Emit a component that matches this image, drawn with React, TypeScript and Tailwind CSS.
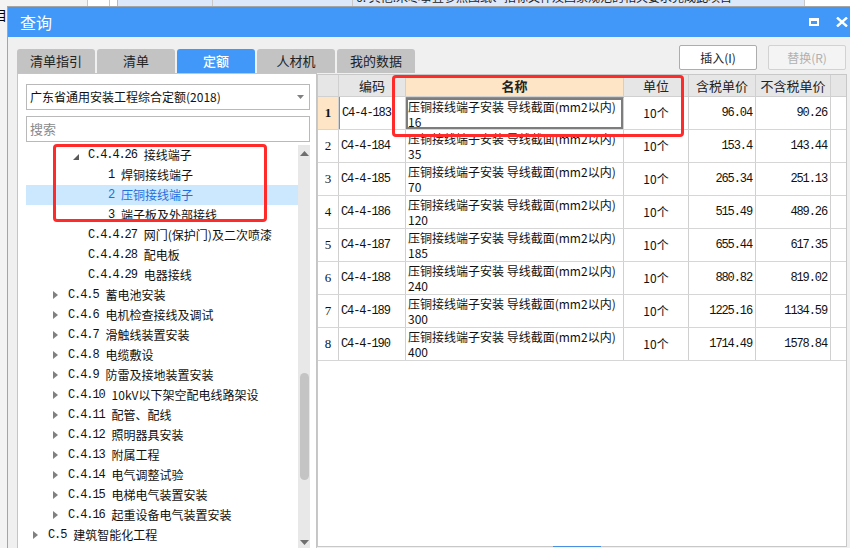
import React from "react";

const mono = "font-['Liberation_Mono',monospace] text-[12px] tracking-[-1.1px]";

type Node = {
  level: number;
  code: string;
  text: string;
  kind: "open" | "closed" | "leaf";
  selected?: boolean;
};

const tree: Node[] = [
  { level: 2, code: "C.4.4.26", text: "接线端子", kind: "open" },
  { level: 3, code: "1", text: "焊铜接线端子", kind: "leaf" },
  { level: 3, code: "2", text: "压铜接线端子", kind: "leaf", selected: true },
  { level: 3, code: "3", text: "端子板及外部接线", kind: "leaf" },
  { level: 2, code: "C.4.4.27", text: "网门(保护门)及二次喷漆", kind: "leaf" },
  { level: 2, code: "C.4.4.28", text: "配电板", kind: "leaf" },
  { level: 2, code: "C.4.4.29", text: "电器接线", kind: "leaf" },
  { level: 1, code: "C.4.5", text: "蓄电池安装", kind: "closed" },
  { level: 1, code: "C.4.6", text: "电机检查接线及调试", kind: "closed" },
  { level: 1, code: "C.4.7", text: "滑触线装置安装", kind: "closed" },
  { level: 1, code: "C.4.8", text: "电缆敷设", kind: "closed" },
  { level: 1, code: "C.4.9", text: "防雷及接地装置安装", kind: "closed" },
  { level: 1, code: "C.4.10", text: "10kV以下架空配电线路架设", kind: "closed" },
  { level: 1, code: "C.4.11", text: "配管、配线", kind: "closed" },
  { level: 1, code: "C.4.12", text: "照明器具安装", kind: "closed" },
  { level: 1, code: "C.4.13", text: "附属工程", kind: "closed" },
  { level: 1, code: "C.4.14", text: "电气调整试验", kind: "closed" },
  { level: 1, code: "C.4.15", text: "电梯电气装置安装", kind: "closed" },
  { level: 1, code: "C.4.16", text: "起重设备电气装置安装", kind: "closed" },
  { level: 0, code: "C.5", text: "建筑智能化工程", kind: "closed" },
];

const indent = ["pl-[7px]", "pl-[27px]", "pl-[47px]", "pl-[67px]"];

const rows = [
  ["C4-4-183", "16", "96.04", "90.26"],
  ["C4-4-184", "35", "153.4", "143.44"],
  ["C4-4-185", "70", "265.34", "251.13"],
  ["C4-4-186", "120", "515.49", "489.26"],
  ["C4-4-187", "185", "655.44", "617.35"],
  ["C4-4-188", "240", "880.82", "819.02"],
  ["C4-4-189", "300", "1225.16", "1134.59"],
  ["C4-4-190", "400", "1714.49", "1578.84"],
];

const cols = "grid grid-cols-[21px_67px_218px_65px_67px_75px]";

function TreeRow({ node }: { node: Node }) {
  return (
    <div
      className={`h-[20px] flex items-center whitespace-nowrap ${indent[node.level]} ${
        node.selected ? "bg-[#cce8ff] text-[#1f6fdc]" : "text-[#111]"
      }`}
    >
      <span className="w-[15px] flex items-center shrink-0">
        {node.kind === "closed" && (
          <svg width="5" height="8" viewBox="0 0 5 8">
            <path d="M0 0 L5 4 L0 8 Z" fill="#808080" />
          </svg>
        )}
        {node.kind === "open" && (
          <svg width="6" height="6" viewBox="0 0 6 6" className="mt-[3px]">
            <path d="M6 0 L6 6 L0 6 Z" fill="#5a5a5a" />
          </svg>
        )}
      </span>
      <span className={mono}>{node.code}</span>
      <span className="ml-[7px] text-[12px] leading-[14px]">{node.text}</span>
    </div>
  );
}

export default function App() {
  return (
    <div className="w-[850px] h-[548px] overflow-hidden flex flex-col bg-[#f3f3f3] font-['Noto_Sans_CJK_SC','Noto_Sans',sans-serif] text-[12px] text-[#111]">
      {/* background window peeking above the dialog */}
      <div className="h-[6px] shrink-0 flex overflow-hidden bg-white">
        <div className="w-[88px] bg-[#f3f3f3] border-r border-[#c8c8c8]" />
        <div className="w-[22px] bg-white border-r border-[#c8c8c8]" />
        <div className="w-[8px] bg-white border-r border-[#f0b060]" />
        <div className="w-[95px] bg-[#dde8fb] border-r border-[#c8c8c8]" />
        <div className="w-[140px] bg-[#dde8fb] border-r border-[#c8c8c8]" />
        <div className="w-[452px] bg-[#dde8fb] border-r border-[#c8c8c8] pl-[3px] overflow-hidden">
          <div className="-mt-[10px] text-[12px] leading-[14px] whitespace-nowrap text-[#222]">
            6. 其他:未尽事宜参照图纸、招标文件及国家规范的相关要求完成此项目
          </div>
        </div>
        <div className="flex-1 bg-white" />
      </div>

      <div className="flex flex-1 min-h-0">
        <div className="w-[7px] shrink-0 bg-[#f3f3f3] overflow-hidden">
          <div className="text-[13px] leading-[14px] mt-[2px] -ml-[6px] text-black">目</div>
        </div>

        {/* dialog */}
        <div className="flex-1 flex flex-col min-w-0 border-l border-t border-[#a5a5a5] bg-[#f0f0f0]">
          <div className="h-[30px] shrink-0 bg-[#4198f8] flex items-center pl-[12px] pr-[2px] text-white">
            <span className="text-[16px] leading-[20px]">查询</span>
            <div className="ml-auto flex items-center gap-[17px]">
              <div className="w-[10px] h-[8px] border-2 border-t-[3px] border-white" />
              <svg width="12" height="10" viewBox="0 0 12 10">
                <path d="M1 0.5 L11 9.5 M11 0.5 L1 9.5" stroke="white" strokeWidth="2.4" />
              </svg>
            </div>
          </div>

          <div className="flex-1 flex flex-col min-h-0 pl-[9px] pr-[3px]">
            {/* tabs + actions */}
            <div className="h-[36px] shrink-0 flex items-start">
              <div className="mt-[12px] flex gap-[2px]">
                {["清单指引", "清单", "定额", "人材机", "我的数据"].map((t) => (
                  <div
                    key={t}
                    className={`w-[78px] h-[24px] rounded-t-[3px] flex items-center justify-center text-[13px] ${
                      t === "定额" ? "bg-[#4198f8] text-white font-medium" : "bg-[#c3c3c3] text-[#222]"
                    }`}
                  >
                    {t}
                  </div>
                ))}
              </div>
              <div className="ml-auto mt-[8px] mr-[1px] flex gap-[11px]">
                <button className="w-[78px] h-[25px] bg-white border border-[#adadad] rounded-[2px] text-[12px] text-[#222]">
                  插入(I)
                </button>
                <button className="w-[78px] h-[25px] bg-[#f4f4f4] border border-[#d2d2d2] rounded-[2px] text-[12px] text-[#b0b0b0]">
                  替换(R)
                </button>
              </div>
            </div>

            {/* panels */}
            <div className="flex-1 flex items-start min-h-0 overflow-hidden">
              {/* left: quota tree */}
              <div className="w-[300px] shrink-0 bg-white border border-[#c5c5c5] pt-[10px] pl-[8px] pr-[6px]">
                <div className="h-[26px] border border-[#b9b9b9] bg-white flex items-center pl-[3px] pr-[5px]">
                  <span className="text-[12px] leading-[14px]">广东省通用安装工程综合定额(2018)</span>
                  <svg width="7" height="4" viewBox="0 0 7 4" className="ml-auto">
                    <path d="M0 0 L7 0 L3.5 4 Z" fill="#808080" />
                  </svg>
                </div>
                <div className="mt-[6px] h-[26px] border border-[#b9b9b9] bg-white flex items-center pl-[3px]">
                  <span className="text-[13px] text-[#8a8a8a]">搜索</span>
                </div>
                <div className="mt-[3px] h-[406px] flex">
                  <div className="flex-1 min-w-0">
                    {tree.map((n) => (
                      <TreeRow key={n.code + n.text} node={n} />
                    ))}
                  </div>
                  <div className="w-[12px] shrink-0 bg-[#e8e8e8] flex flex-col items-center">
                    <svg width="9" height="5" viewBox="0 0 9 5" className="mt-[6px]">
                      <path d="M0 5 L4.5 0 L9 5 Z" fill="#6e6e6e" />
                    </svg>
                    <div className="mt-[217px] w-[9px] h-[107px] rounded-full bg-[#c4c4c4]" />
                    <svg width="9" height="5" viewBox="0 0 9 5" className="mt-auto mb-[6px]">
                      <path d="M0 0 L9 0 L4.5 5 Z" fill="#6e6e6e" />
                    </svg>
                  </div>
                </div>
              </div>

              {/* right: quota table */}
              <div className="relative flex-1 min-w-0 h-[473px] mt-[1px] bg-white border border-[#c8c8c8]">
                <div className={`${cols} h-[22px] bg-[#e6e6e6] border-b border-[#d0d0d0] text-[13px] text-[#222]`}>
                  <div className="border-r border-[#d0d0d0]" />
                  <div className="border-r border-[#d0d0d0] flex items-center justify-center">编码</div>
                  <div className="border-r border-[#d0d0d0] bg-[#fde5c5] flex items-center justify-center font-bold">
                    名称
                  </div>
                  <div className="border-r border-[#d0d0d0] flex items-center justify-center">单位</div>
                  <div className="border-r border-[#d0d0d0] flex items-center justify-center">含税单价</div>
                  <div className="border-r border-[#d0d0d0] flex items-center justify-center">不含税单价</div>
                </div>
                {rows.map((r, i) => (
                  <div key={r[0]} className={`${cols} h-[33px] border-b border-[#d6d6d6]`}>
                    <div
                      className={`border-r border-[#d0d0d0] flex items-center justify-center font-['Liberation_Serif',serif] text-[13px] ${
                        i === 0 ? "bg-[#fde5c5] font-bold" : ""
                      }`}
                    >
                      {i + 1}
                    </div>
                    <div
                      className={`border-r border-[#d0d0d0] flex items-center pl-[2px] ${mono} ${
                        i === 0 ? "border-l border-l-[#4a9cf0]" : ""
                      }`}
                    >
                      {r[0]}
                    </div>
                    <div
                      className={`border-r border-[#d0d0d0] pl-[2px] pt-[1px] text-[12px] leading-[15px] whitespace-nowrap overflow-hidden ${
                        i === 0 ? "shadow-[inset_0_0_0_2px_#7d7d7d] border-t border-t-[#4a9cf0]" : ""
                      }`}
                    >
                      <div>压铜接线端子安装 导线截面(mm2以内)</div>
                      <div>{r[1]}</div>
                    </div>
                    <div className="border-r border-[#d0d0d0] flex items-center justify-center text-[12px]">10个</div>
                    <div className={`border-r border-[#d0d0d0] flex items-center justify-end pr-[3px] ${mono}`}>{r[2]}</div>
                    <div className={`border-r border-[#d0d0d0] flex items-center justify-end pr-[3px] ${mono}`}>{r[3]}</div>
                  </div>
                ))}
                <div className="absolute left-[235px] bottom-[-1px] w-[48px] h-[1px] bg-[#4a90e2]" />
              </div>
            </div>
          </div>
        </div>
      </div>

      {/* annotation boxes */}
      <div className="absolute left-[53px] top-[144px] w-[214px] h-[78px] border-[3px] border-[#ff2a2a] rounded-[4px] pointer-events-none" />
      <div className="absolute left-[392px] top-[75px] w-[292px] h-[62px] border-[3px] border-[#ff2a2a] rounded-[4px] pointer-events-none" />
    </div>
  );
}
